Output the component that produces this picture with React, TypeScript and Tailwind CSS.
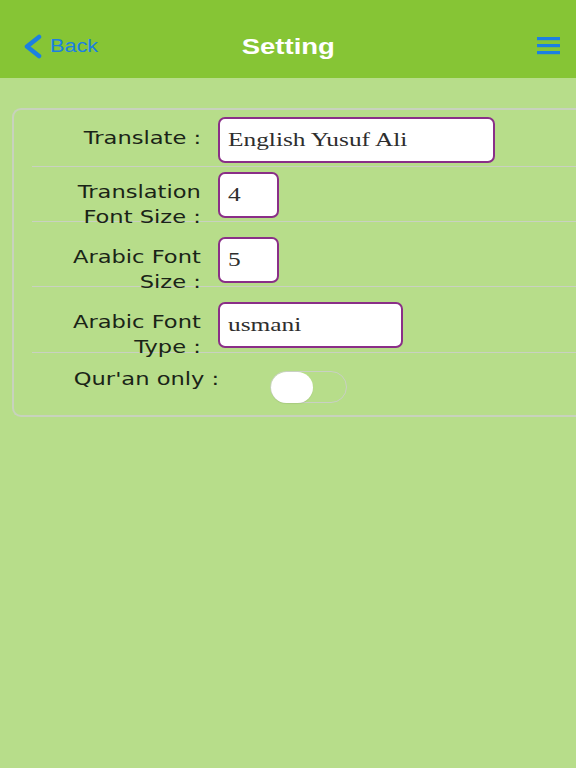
import React from "react";

const labelFont = { fontFamily: '"DejaVu Sans", Verdana, sans-serif' };
const serifFont = { fontFamily: '"Liberation Serif", "Times New Roman", serif' };
const headFont = { fontFamily: '"Liberation Sans", Arial, sans-serif' };

function Label({ lines, mt }: { lines: string[]; mt: string }) {
  return (
    <div className={`flex w-[169px] shrink-0 justify-end ${mt}`}>
      <div
        className="origin-right scale-x-[1.22] text-right text-[18.5px] leading-[25px] text-[#1a2417] whitespace-nowrap"
        style={labelFont}
      >
        {lines.map((l, i) => (
          <div key={i}>{l}</div>
        ))}
      </div>
    </div>
  );
}

function Field({ value, w, mt }: { value: string; w: string; mt: string }) {
  return (
    <div
      className={`ml-[17px] ${w} ${mt} h-[46px] shrink-0 rounded-[7px] border-2 border-[#8a2f88] bg-white flex items-center pl-[8px] overflow-hidden`}
    >
      <span
        className="inline-block origin-left scale-x-[1.3] text-[19.5px] text-[#2e2e2e] whitespace-nowrap"
        style={serifFont}
      >
        {value}
      </span>
    </div>
  );
}

export default function App() {
  return (
    <div className="min-h-screen w-full bg-[#b7dd8a] overflow-hidden">
      {/* Header */}
      <div className="h-[78px] bg-[#86c535] pt-[14px] grid grid-cols-[1fr_auto_1fr] items-center">
        <div className="flex items-center pl-[22px]">
          <svg width="22" height="26" viewBox="0 0 22 26" className="mt-[1px]">
            <path
              d="M17 3 L5 12.5 L17 22"
              fill="none"
              stroke="#1b80e2"
              strokeWidth="4.5"
              strokeLinecap="round"
              strokeLinejoin="round"
            />
          </svg>
          <span
            className="ml-[6px] inline-block origin-left scale-x-[1.2] text-[18px] text-[#1b80e2]"
            style={headFont}
          >
            Back
          </span>
        </div>
        <div
          className="scale-x-[1.25] text-[22px] font-bold text-white"
          style={headFont}
        >
          Setting
        </div>
        <div className="flex justify-end pr-[16px]">
          <svg width="23" height="18" viewBox="0 0 23 18">
            <rect x="0" y="0" width="23" height="3.2" fill="#1b80e2" />
            <rect x="0" y="7" width="23" height="3.2" fill="#1b80e2" />
            <rect x="0" y="14" width="23" height="3.2" fill="#1b80e2" />
          </svg>
        </div>
      </div>

      {/* Card */}
      <div className="mt-[30px] ml-[12px] -mr-[4px] rounded-l-[9px] border-2 border-r-0 border-[#c8d2bd]">
        <div className="ml-[18px]">
          <div className="flex h-[56px]">
            <Label lines={["Translate :"]} mt="mt-[15px]" />
            <Field value="English Yusuf Ali" w="w-[277px]" mt="mt-[7px]" />
          </div>
          <div className="flex h-[55px] border-t border-[#c9d1c1]">
            <Label lines={["Translation", "Font Size :"]} mt="mt-[12px]" />
            <Field value="4" w="w-[61px]" mt="mt-[5px]" />
          </div>
          <div className="flex h-[65px] border-t border-[#c9d1c1]">
            <Label lines={["Arabic Font", "Size :"]} mt="mt-[22px]" />
            <Field value="5" w="w-[61px]" mt="mt-[15px]" />
          </div>
          <div className="flex h-[66px] border-t border-[#c9d1c1]">
            <Label lines={["Arabic Font", "Type :"]} mt="mt-[22px]" />
            <Field value="usmani" w="w-[185px]" mt="mt-[15px]" />
          </div>
          <div className="flex h-[63px] border-t border-[#c9d1c1]">
            <div className="flex w-[187px] shrink-0 justify-end mt-[13px]">
              <div
                className="origin-right scale-x-[1.22] text-right text-[18.5px] leading-[25px] text-[#1a2417] whitespace-nowrap"
                style={labelFont}
              >
                Qur'an only :
              </div>
            </div>
            <div className="ml-[51px] mt-[18px] h-[32px] w-[77px] rounded-full border-[1.5px] border-[#c9d0c4] flex items-center">
              <div className="h-[31px] w-[42px] rounded-full bg-white shadow-[0_1px_1px_rgba(0,0,0,0.08)]" />
            </div>
          </div>
        </div>
      </div>
    </div>
  );
}
